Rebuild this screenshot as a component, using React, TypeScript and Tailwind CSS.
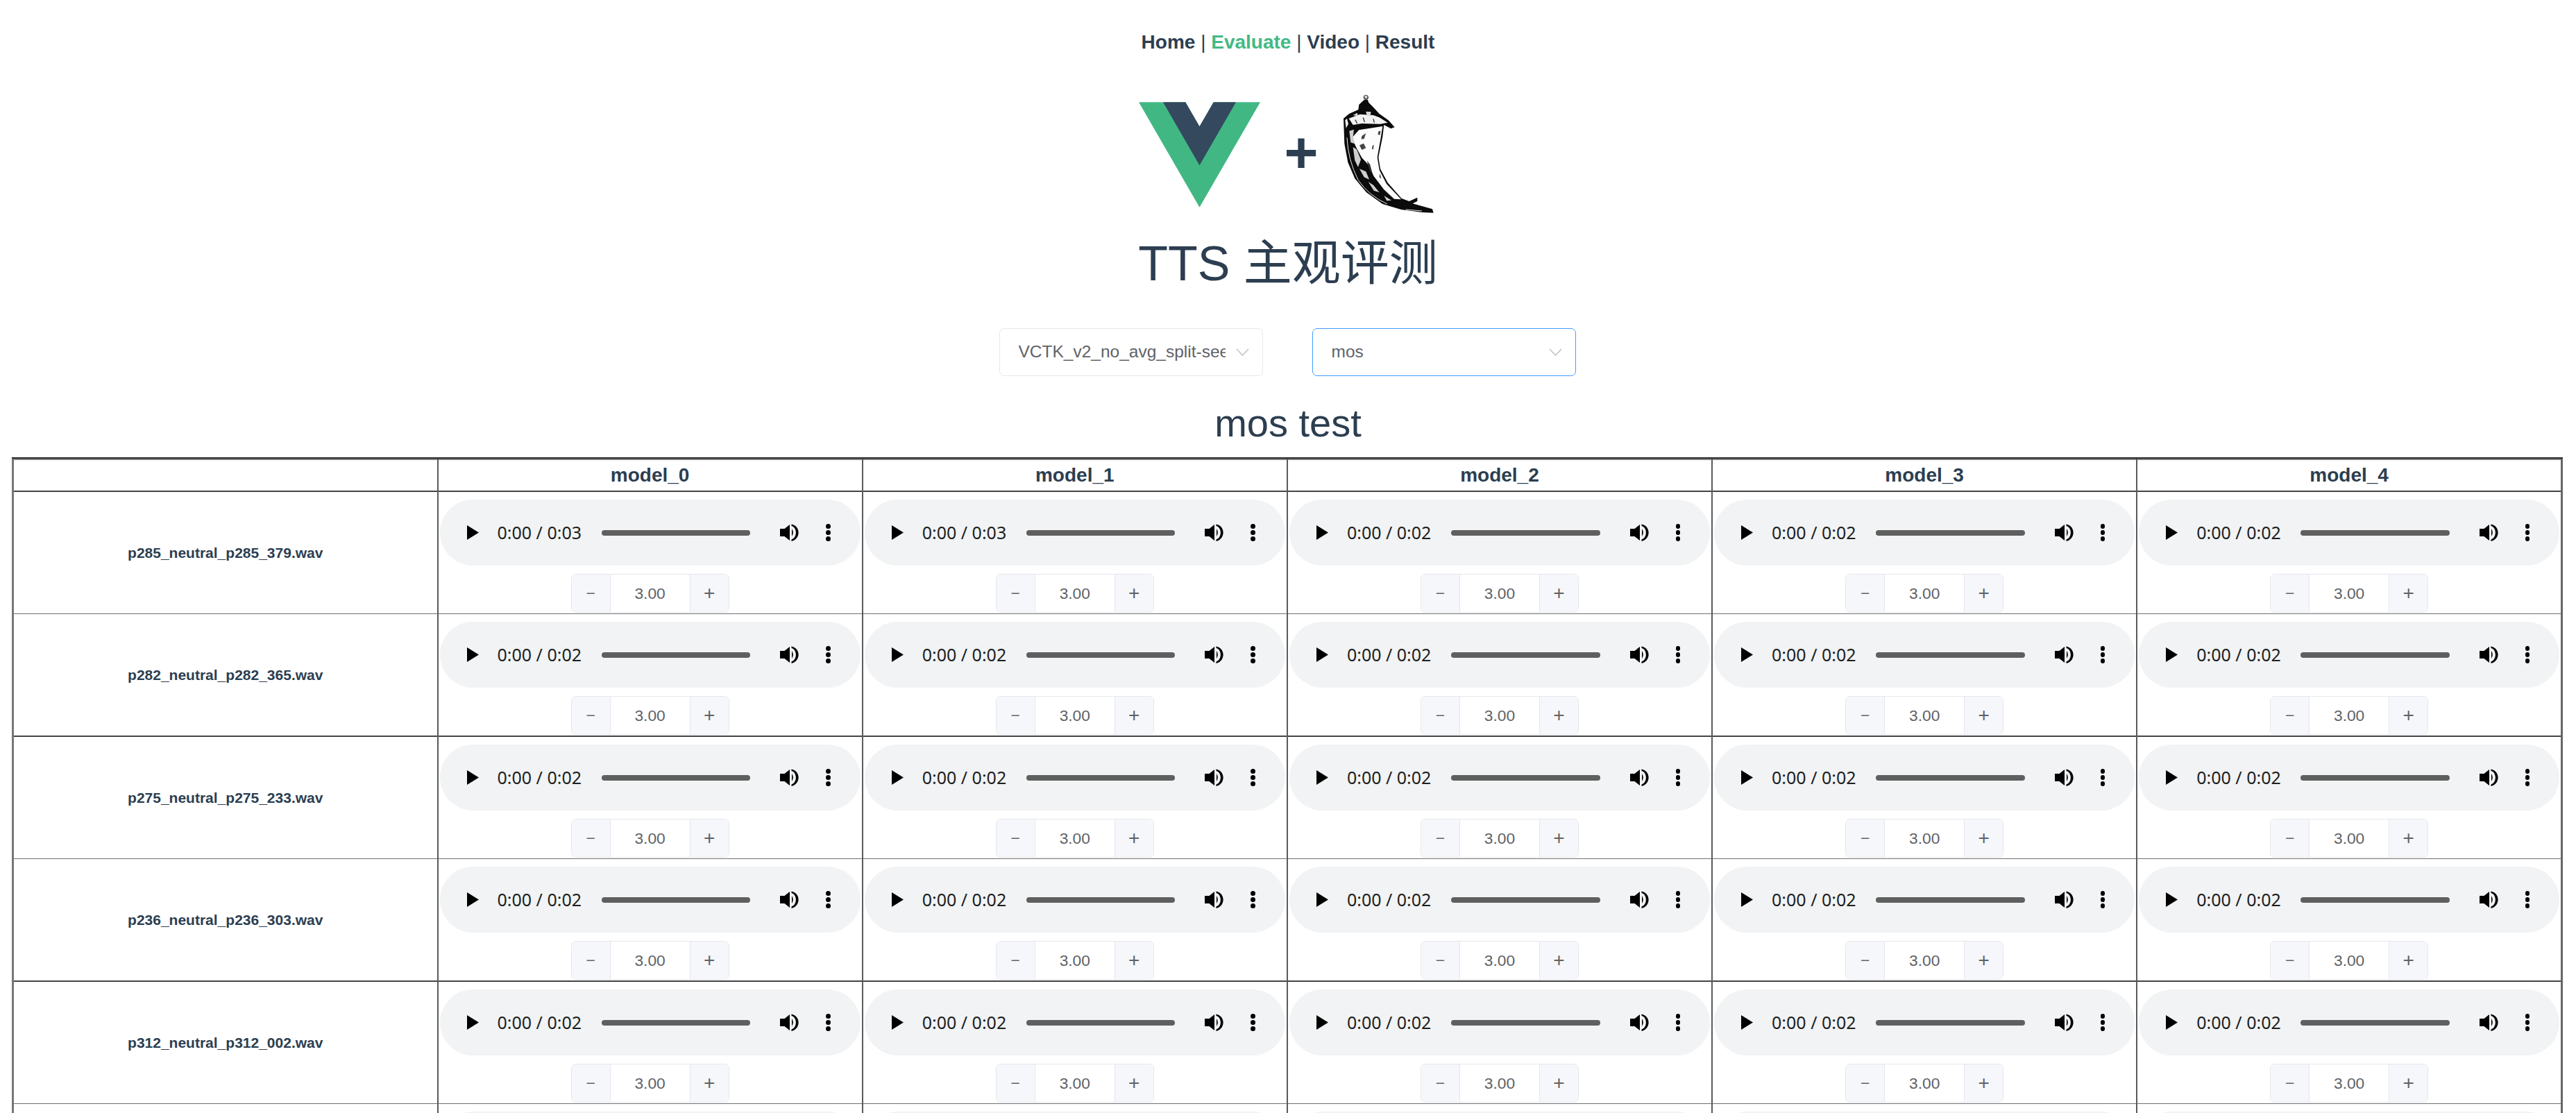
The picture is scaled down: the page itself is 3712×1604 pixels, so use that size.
import React from 'react';

const models = ['model_0', 'model_1', 'model_2', 'model_3', 'model_4'];

const rows = [
  { file: 'p285_neutral_p285_379.wav', times: ['0:03', '0:03', '0:02', '0:02', '0:02'], strong: false },
  { file: 'p282_neutral_p282_365.wav', times: ['0:02', '0:02', '0:02', '0:02', '0:02'], strong: true },
  { file: 'p275_neutral_p275_233.wav', times: ['0:02', '0:02', '0:02', '0:02', '0:02'], strong: false },
  { file: 'p236_neutral_p236_303.wav', times: ['0:02', '0:02', '0:02', '0:02', '0:02'], strong: true },
  { file: 'p312_neutral_p312_002.wav', times: ['0:02', '0:02', '0:02', '0:02', '0:02'], strong: false },
  { file: '', times: ['0:02', '0:02', '0:02', '0:02', '0:02'], strong: false },
];

const VueLogo = () => (
  <svg viewBox="0 0 261.76 226.69" className="w-[175px] h-[152px] shrink-0">
    <path d="M161.096.001l-30.225 52.351L100.647.001H-.005l130.876 226.688L261.749.001z" fill="#41b883" />
    <path d="M161.096.001l-30.225 52.351L100.647.001H52.346l78.525 136.01L209.398.001z" fill="#34495e" />
  </svg>
);

// hand drawn horn, coordinates are 3x page pixels
const FlaskHorn = () => (
  <svg viewBox="0 0 435 555" className="w-[145px] h-[185px] shrink-0 -ml-[5px] -mr-[7px] blur-[0.7px]">
    <circle cx="118" cy="31" r="11" fill="#555" />
    <circle cx="118" cy="29" r="6" fill="#ddd" />
    <path
      d="M110 42 L126 42 L130 54 L146 70 L176 102 L215 130 L242 160 L226 166 L196 150 L190 200 L172 290 L180 340 L212 400 L272 468 L305 480 L340 464 L340 480 L320 490 L405 514 L410 530 L360 528 L270 516 L190 492 L120 442 L70 382 L40 312 L25 232 L21 122 L45 102 L85 84 L88 62 Z"
      fill="#0b0b0b"
    />
    <path d="M44 122 L92 104 L150 108 L176 118 L212 140 L180 146 L100 144 L62 150 Z" fill="#f2f2f2" />
    <path d="M62 108 L80 98 L84 112 Z M118 92 L140 94 L136 112 L122 110 Z" fill="#dcdcdc" />
    <path d="M28 130 L36 122 L42 146 L32 164 Z" fill="#eee" />
    <path
      d="M88 172 L190 156 L183 200 L167 290 L176 345 L207 405 L270 472 L240 470 L196 430 L152 372 L128 322 L100 292 L74 244 L58 205 Z"
      fill="#fcfcfc"
    />
    <path d="M46 176 L66 170 L62 200 L70 232 L52 226 Z M62 246 L78 256 L96 300 L84 332 L70 304 Z M90 340 L118 352 L132 386 L110 376 Z M128 396 L150 410 L176 442 L152 434 Z M196 456 L228 476 L208 478 Z" fill="#cfcfcf" />
    <path d="M100 198 L118 186 L110 210 L98 212 Z M90 238 L108 230 L118 250 L100 258 Z M146 240 L152 236 L150 256 L144 254 Z M172 178 L182 176 L178 194 L170 192 Z" fill="#444" />
    <path d="M122 304 L136 322 L146 360 L134 346 Z M178 360 L184 382 L176 376 Z" fill="#333" />
    <path d="M36 205 Q40 300 84 388 Q130 456 210 492 M290 516 L360 522" stroke="#e8e8e8" strokeWidth="3" fill="none" />
    <path d="M106 118 L112 138 M150 124 L154 140 M72 128 L80 144" stroke="#333" strokeWidth="4" fill="none" />
  </svg>
);

const Chevron = () => (
  <svg viewBox="0 0 19 11" className="w-[19px] h-[11px] shrink-0" fill="none" stroke="#c0c4cc" strokeWidth="1.6">
    <path d="M1 1 L9.5 10 L18 1" />
  </svg>
);

const Select = ({ value, focused }: { value: string; focused?: boolean }) => (
  <div className={`flex items-center w-[380px] h-[69px] bg-white rounded-[7px] border-[1.75px] pl-[27px] pr-[19px] ${focused ? 'border-[#409eff]' : 'border-[#e4e7ed]'}`}>
    <span className="flex-1 min-w-0 overflow-hidden whitespace-nowrap text-left text-[24.5px] text-[#606266] mr-[15px]">{value}</span>
    <Chevron />
  </div>
);

const VolumeIcon = () => (
  <svg viewBox="0 0 27 25" className="w-[27px] h-[25px] shrink-0 ml-[43px]" fill="#000">
    <path d="M0 7 H6.5 L14 1 V24 L6.5 18 H0 Z" />
    <path d="M17 7 Q20.5 12.5 17 18 Z" />
    <path d="M16.5 0.5 C30 3 30 22 16.5 25 V22.5 C25 20 25 5 16.5 3 Z" />
  </svg>
);

const AudioBar = ({ time }: { time: string }) => (
  <div className="flex items-center h-[95px] rounded-[48px] bg-[#f1f3f4] pl-[39px] pr-[43px]">
    <svg viewBox="0 0 17 21" className="w-[17px] h-[21px] shrink-0" fill="#000">
      <path d="M0 0 L17 10.5 L0 21 Z" />
    </svg>
    <span className="ml-[27px] w-[121px] shrink-0 text-left text-[25px] whitespace-nowrap text-[#1f1f1f] font-['Noto_Sans',sans-serif]">0:00 / {time}</span>
    <div className="ml-[29px] flex-1 h-[8px] rounded-full bg-[#5f5f5f]" />
    <VolumeIcon />
    <div className="ml-[39px] flex flex-col gap-[2.4px] shrink-0">
      <span className="block w-[6.5px] h-[6.5px] rounded-full bg-black" />
      <span className="block w-[6.5px] h-[6.5px] rounded-full bg-black" />
      <span className="block w-[6.5px] h-[6.5px] rounded-full bg-black" />
    </div>
  </div>
);

const ScoreInput = () => (
  <div className="mt-[12px] mx-auto flex w-[228px] h-[56px] rounded-[7px] border-[1.75px] border-[#e4e7ed] overflow-hidden text-[#606266]">
    <div className="w-[56px] flex items-center justify-center bg-[#f5f7fa] border-r-[1.75px] border-[#e4e7ed] text-[23px] font-light">−</div>
    <div className="flex-1 flex items-center justify-center text-[22.75px] bg-white">3.00</div>
    <div className="w-[56px] flex items-center justify-center bg-[#f5f7fa] border-l-[1.75px] border-[#e4e7ed] text-[28px] font-light">+</div>
  </div>
);

export default function App() {
  return (
    <div className="h-[1604px] overflow-hidden bg-white text-center text-[#2c3e50] font-['Liberation_Sans',Arial,sans-serif]">
      <nav className="pt-[44px] h-[137px] text-[28px] leading-[34px]">
        <b>Home</b> | <b className="text-[#42b983]">Evaluate</b> | <b>Video</b> | <b>Result</b>
      </nav>

      <div className="flex items-center justify-center h-[171px] pr-[4px]">
        <VueLogo />
        <span className="mx-[34px] text-[84px] leading-none font-bold -translate-y-[3px]">+</span>
        <FlaskHorn />
      </div>

      <h1 className="mt-[28px] text-[70px] leading-[88px] font-normal font-['Liberation_Sans','Noto_Sans_CJK_SC',sans-serif]">TTS 主观评测</h1>

      <div className="mt-[49px] pr-[2px] flex justify-center gap-[71px]">
        <Select value="VCTK_v2_no_avg_split-seed-0" />
        <Select value="mos" focused />
      </div>

      <h2 className="mt-[36px] text-[56px] leading-[64px] font-normal">mos test</h2>

      <div className="ml-[17px] mr-[19px] mt-[17px] border-t-[2px] border-[#2b2b2b]">
        <table className="w-full table-fixed border-collapse border-x-[3px] border-t-[2px] border-l-[#777] border-r-[#666] border-t-[#808080]">
          <colgroup>
            <col className="w-[612px]" />
            {models.map(m => <col key={m} />)}
          </colgroup>
          <thead>
            <tr className="border-b-[2px] border-[#444]">
              <th className="h-[46px] border-r-2 border-[#5a5a5a]" />
              {models.map(m => (
                <th key={m} className="border-l-2 border-[#5a5a5a] text-[28px] leading-[32px] font-bold">{m}</th>
              ))}
            </tr>
          </thead>
          <tbody>
            {rows.map(row => (
              <tr key={row.file} className={row.strong ? 'border-b-[2px] border-[#444]' : 'border-b border-[#707070]'}>
                <td className="border-r-2 border-[#5a5a5a] text-[21px] font-bold align-middle">{row.file}</td>
                {row.times.map((t, i) => (
                  <td key={i} className="border-l-2 border-[#5a5a5a] px-[2px] pt-[11px] pb-[1px] align-top">
                    <AudioBar time={t} />
                    <ScoreInput />
                  </td>
                ))}
              </tr>
            ))}
          </tbody>
        </table>
      </div>
    </div>
  );
}
